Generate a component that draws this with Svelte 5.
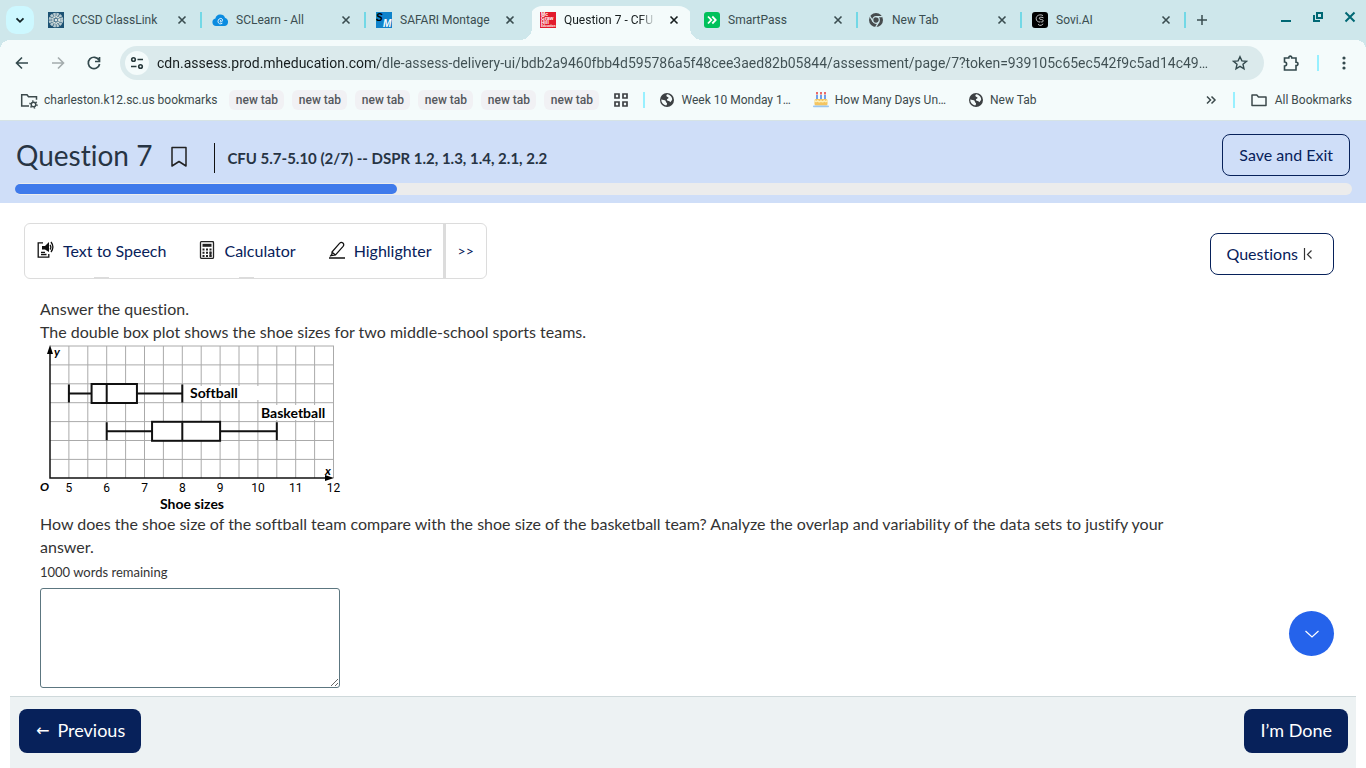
<script>
  const tabs = [
    { title: 'CCSD ClassLink', icon: 'classlink' },
    { title: 'SCLearn - All', icon: 'cloud' },
    { title: 'SAFARI Montage', icon: 'safari' },
    { title: 'Question 7 - CFU', icon: 'mcgraw', active: true },
    { title: 'SmartPass', icon: 'smartpass' },
    { title: 'New Tab', icon: 'chrome' },
    { title: 'Sovi.AI', icon: 'sovi' }
  ]

  const newTabs = [1, 2, 3, 4, 5, 6]

  const bookmarks = [
    { title: 'Week 10 Monday 1…', icon: 'globe' },
    { title: 'How Many Days Un…', icon: 'cake' },
    { title: 'New Tab', icon: 'globe' }
  ]

  const answered = 2
  const total = 7

  // plot geometry, one grid cell is half a shoe size
  const cell = 18.9
  const left = 10
  const top = 1
  const x = size => left + (size - 4.5) * 2 * cell
  const columns = Array.from({ length: 15 }, (_, i) => left + (i + 1) * cell)
  const rows = Array.from({ length: 7 }, (_, i) => top + i * cell)
  const plots = [
    { min: 5, q1: 5.6, median: 6, q3: 6.8, max: 8, y: 48.5 },
    { min: 6, q1: 7.2, median: 8, q3: 9, max: 10.5, y: 86.3 }
  ]
  const ticks = [5, 6, 7, 8, 9, 10, 11, 12]

  let url = 'cdn.assess.prod.mheducation.com/dle-assess-delivery-ui/bdb2a9460fbb4d595786a5f48cee3aed82b05844/assessment/page/7?token=939105c65ec542f9c5ad14c49…'
  let answer = ''
</script>

{#snippet icon(name)}
  <svg class="icon" viewBox="0 0 16 16" aria-hidden="true">
    {#if name === 'classlink'}
      <rect width="16" height="16" fill="#1d5273" />
      <circle cx="8" cy="8" r="5.8" fill="none" stroke="#b9cbd0" stroke-width="3" stroke-dasharray="2.4 .6" />
      <circle cx="8" cy="8" r="3.2" fill="none" stroke="#dfe5df" stroke-width="2" stroke-dasharray="1.6 .4" />
      <circle cx="8" cy="8" r="1.5" fill="#dce4e4" />
    {:else if name === 'cloud'}
      <path d="M4 14a3.8 3.8 0 0 1-.6-7.5A5 5 0 0 1 13 5.8 4.2 4.2 0 0 1 12.4 14z" fill="#0b8ce0" />
      <path d="M10.4 11.2c-2 1.4-4.4.4-4.4-1.7 0-2.1 1.900-3.500 3.500-3 1.500.5 1 2.700-.1 3.500-.8.6-1.300 0-1-.9l.4-1.200" fill="none" stroke="#fff" stroke-width=".9" />
    {:else if name === 'safari'}
      <rect width="16" height="16" fill="#0f83cb" />
      <text x="0" y="9" class="logo-s">S</text>
      <text x="7" y="15" class="logo-m">M</text>
    {:else if name === 'mcgraw'}
      <rect width="16" height="16" fill="#e21a2c" />
      <text x="1" y="4" class="logo-mh">Mc</text>
      <text x="1" y="8" class="logo-mh">Graw</text>
      <text x="1" y="12" class="logo-mh">Hill</text>
      <text x="1" y="15" class="logo-mh small">Education</text>
    {:else if name === 'smartpass'}
      <rect width="16" height="16" rx="3" fill="#00c15b" />
      <path d="M4 4.5 7.3 8 4 11.5M8.3 4.5 11.7 8l-3.4 3.5" fill="none" stroke="#fff" stroke-width="1.8" />
    {:else if name === 'chrome'}
      <circle cx="8" cy="8" r="7" fill="#474c4e" />
      <circle cx="8" cy="8" r="3.3" fill="none" stroke="#cfe7eb" stroke-width="1.2" />
      <path d="M8 4.7h6.4M5.1 9.6 1.9 4.2M10.9 9.6l-3.2 5.5" stroke="#cfe7eb" stroke-width="1.2" />
    {:else if name === 'sovi'}
      <rect width="16" height="16" rx="3" fill="#000" />
      <path d="M11 3.6C8.500 2 4.200 3 4.200 6.600c0 2.400 1.600 3.300 3.800 3.500M11.500 5.800c-2-1-4.500-.7-4.300.7.300 1.400 4.300.5 4.100 2.400-.1 1.200-1.800 1.300-2.800.9M6 12.300l1.600 1h1.600l2-1.400" fill="none" stroke="#d4d6d7" stroke-width=".9" />
    {:else if name === 'globe'}
      <circle cx="8" cy="8" r="7" fill="#3c4043" />
      <path d="M8.8 2.2c-1.4.3-1.7 1.2-1.2 2 .5.7 1.8.6 1.9 1.6.1 1.3-1.8.8-1.6 2.3.2 1 1.8.6 2.5 1.2l1 .9 1.8-2.4c.1-2.6-1.5-4.7-4.4-5.6M2.2 7.5l3.6.7c1.5.4.7 1.9 1.8 2.5.8.5.5 1.8-.4 2.8-2.8-.8-5-2.8-5-6" fill="#f4fbfb" />
    {:else if name === 'cake'}
      <path d="M4 3v5M8 3v5M12 3v5" stroke="#5b8fe4" stroke-width="1.7" />
      <path d="M4 0v2.5M8 0v2.5M12 0v2.5" stroke="#e8504f" stroke-width="1.7" />
      <rect x="1.5" y="7" width="13" height="6.5" rx="1.5" fill="#f4c561" />
      <path d="M1.5 8.5q1.6 2 3.2.3 1.7 2 3.3.2 1.6 1.8 3.3-.2 1.7 1.8 3.2-.3" fill="none" stroke="#fdf0b8" stroke-width="1.5" />
      <rect x="0" y="13.5" width="16" height="1.7" rx=".8" fill="#9cc6ee" />
    {/if}
  </svg>
{/snippet}

<div class="page">
  <div class="strip">
    <button class="tab-search" aria-label="Search tabs">
      <svg class="icon" viewBox="0 0 16 16"><path d="m4.5 6.3 3.5 3.5 3.5-3.5" fill="none" stroke="#122326" stroke-width="1.8" /></svg>
    </button>
    {#each tabs as tab}
      <div class="tab" class:active={tab.active}>
        {@render icon(tab.icon)}
        <a href="#tab">{tab.title}</a>
        <button class="close" aria-label="Close tab">
          <svg viewBox="0 0 16 16"><path d="m4.5 4.5 7 7m0-7-7 7" fill="none" stroke="currentColor" stroke-width="1.6" /></svg>
        </button>
      </div>
    {/each}
    <button class="plain add" aria-label="New tab">
      <svg class="icon" viewBox="0 0 16 16"><path d="M8 3v10M3 8h10" stroke="#3a4d50" stroke-width="1.5" /></svg>
    </button>
    <div class="window">
      <button class="plain" aria-label="Minimize"><svg class="icon" viewBox="0 0 16 16"><path d="M3 12h10" stroke="#006874" stroke-width="2" /></svg></button>
      <button class="plain" aria-label="Restore"><svg class="icon" viewBox="0 0 16 16"><path d="M7 4h5v5H7zM4 6v6h6" fill="none" stroke="#006874" stroke-width="2" /></svg></button>
      <button class="plain" aria-label="Close window"><svg class="icon" viewBox="0 0 16 16"><path d="m3.5 3.5 9 9m0-9-9 9" stroke="#006874" stroke-width="2" /></svg></button>
    </div>
  </div>

  <div class="chrome">
    <div class="nav">
      <button class="plain" aria-label="Back"><svg class="icon" viewBox="0 0 16 16"><path d="M14 8H3M8 2.5 2.5 8 8 13.5" fill="none" stroke="#33494d" stroke-width="1.6" /></svg></button>
      <button class="plain" aria-label="Forward" disabled><svg class="icon" viewBox="0 0 16 16"><path d="M2 8h11M8 2.5 13.5 8 8 13.5" fill="none" stroke="#a3acad" stroke-width="1.6" /></svg></button>
      <button class="plain" aria-label="Reload"><svg class="icon" viewBox="0 0 16 16"><path d="M13 5.2A5.7 5.7 0 1 0 13.6 9M13.5 2v4.5H9" fill="none" stroke="#33494d" stroke-width="1.7" /></svg></button>
      <div class="omnibox">
        <button class="site" aria-label="Site information">
          <svg class="icon" viewBox="0 0 16 16" fill="none" stroke="#27393b" stroke-width="1.6"><path d="M8.5 4.5H14M2 11.5h5.5" /><circle cx="4.5" cy="4.5" r="1.8" /><circle cx="11.5" cy="11.5" r="1.8" /></svg>
        </button>
        <input class="url" aria-label="Address" bind:value={url} />
        <button class="plain" aria-label="Bookmark this tab">
          <svg class="icon" viewBox="0 0 16 16"><path d="m8 1.7 1.9 4.2 4.6.4-3.5 3 1 4.5L8 11.4l-4 2.4 1-4.5-3.5-3 4.6-.4z" fill="none" stroke="#33494d" stroke-width="1.4" /></svg>
        </button>
      </div>
      <div class="tools">
        <button class="plain" aria-label="Extensions">
          <svg class="large" viewBox="0 0 18 18"><path d="M2.5 4h4.3C6.5 1.5 10 1.5 9.8 4H14v4.2c2.6-.2 2.6 3.6 0 3.4V16H2.5v-4c2.8 0 2.8-4 0-4z" fill="none" stroke="#33494d" stroke-width="1.6" /></svg>
        </button>
        <span class="bar"></span>
        <button class="plain" aria-label="Menu">
          <svg class="icon" viewBox="0 0 16 16" fill="#33494d"><circle cx="8" cy="3" r="1.6" /><circle cx="8" cy="8" r="1.6" /><circle cx="8" cy="13" r="1.6" /></svg>
        </button>
      </div>
    </div>

    <div class="bookmarks">
      <a class="bookmark managed" href="#managed">
        <svg class="large" viewBox="0 0 18 18" fill="none" stroke="#3c4a4c" stroke-width="1.5"><path d="M9 15H1.7V3.7H7l1.5 2h8v3" /><circle cx="13.5" cy="13.5" r="2.3" /><circle cx="13.5" cy="13.5" r="3.5" stroke-dasharray="1.4 2.27" /></svg>
        charleston.k12.sc.us bookmarks
      </a>
      <div class="chips">
        {#each newTabs as n (n)}
          <a class="chip" href="#new">new tab</a>
        {/each}
      </div>
      <button class="plain grid" aria-label="Tab groups">
        <svg class="icon" viewBox="0 0 16 16"><path d="M2 2h4v4H2zM10 2h4v4h-4zM2 10h4v4H2zM10 10h4v4h-4z" fill="none" stroke="#3c4043" stroke-width="1.7" /></svg>
      </button>
      <span class="bar"></span>
      <div class="sites">
        {#each bookmarks as mark}
          <a class="bookmark" href="#bookmark">{@render icon(mark.icon)}{mark.title}</a>
        {/each}
      </div>
      <button class="plain more" aria-label="More bookmarks">
        <svg class="icon" viewBox="0 0 16 16"><path d="m4 4.5 3.5 3.5L4 11.5M8.5 4.5 12 8l-3.5 3.5" fill="none" stroke="#3c4a4c" stroke-width="1.5" /></svg>
      </button>
      <span class="bar"></span>
      <a class="bookmark all" href="#all">
        <svg class="icon" viewBox="0 0 16 16"><path d="M1 3h4.8l1.7 2H15v8.5H1z" fill="none" stroke="#3c4a4c" stroke-width="1.5" stroke-linejoin="round" /></svg>
        All Bookmarks
      </a>
    </div>
  </div>

  <header>
    <div class="heading">
      <h1>Question 7</h1>
      <button class="plain flag" aria-label="Bookmark question">
        <svg viewBox="0 0 18 22"><path d="M2 1.5h14V20l-7-4.5L2 20z" fill="none" stroke="#222" stroke-width="1.5" stroke-linejoin="round" /></svg>
      </button>
      <h2>CFU 5.7-5.10 (2/7) -- DSPR 1.2, 1.3, 1.4, 2.1, 2.2</h2>
      <button class="outline">Save and Exit</button>
    </div>
    <div class="progress"><div class="fill" style="width: {answered / total * 100}%"></div></div>
  </header>

  <main>
    <div class="actions">
      <div class="toolbar">
        <button class="tool">
          <svg viewBox="0 0 18 18" fill="none" stroke="#111" stroke-width="1.3"><path d="M6 1.8H1.2v14.4h10.600V13" /><path d="M5 5h3l4-4v10L8 8.500H5z" fill="#111" stroke="none" /><path d="M13 4q1.700 2.200 0 4.500M14 1q3.800 5 0 10M4 11.300h4M4 13.500h5.500" /></svg>
          Text to Speech
        </button>
        <button class="tool">
          <svg viewBox="0 0 18 18" fill="none" stroke="#222" stroke-width="2"><rect x="2.500" y=".5" width="13" height="17" rx="1.2" stroke-width="1.3" /><path d="M4.500 4.300h9" stroke-width="3" /><path d="M4.500 8.500h9M4.500 11.700h9M4.500 14.900h9" stroke-dasharray="2 1.5" /><path d="M12.500 10.500v5.400" /></svg>
          Calculator
        </button>
        <button class="tool">
          <svg viewBox="0 0 18 18" fill="none" stroke="#111" stroke-width="1.2"><path d="m4 11 7.500-8.600q1.700-1.800 3.400-.4 1.600 1.600.2 3.400L7.500 14l-3.700.6zM3.800 11l3.700 3M4 13l-2 2.500" /><path d="M1 17h16" stroke-width="1.5" /></svg>
          Highlighter
        </button>
        <button class="tool next" aria-label="More tools">&gt;&gt;</button>
      </div>
      <button class="outline">
        Questions
        <svg viewBox="0 0 12 14"><path d="M2.5 1v12M9.5 3.500l-4 4 4 4" fill="none" stroke="#333" stroke-width="1.2" /></svg>
      </button>
    </div>

    <article>
      <p>Answer the question.</p>
      <p>The double box plot shows the shoe sizes for two middle-school sports teams.</p>
      <svg class="plot" viewBox="0 0 304 168" role="img" aria-label="Double box plot of shoe sizes">
        {#each columns as cx}
          <line x1={cx} x2={cx} y1="1" y2="133" class="rule" />
        {/each}
        {#each rows as cy}
          <line x1="10" x2="294" y1={cy} y2={cy} class="rule" />
        {/each}
        <rect x="147" y="41" width="74" height="14" fill="#fff" />
        <rect x="219" y="60" width="68" height="15" fill="#fff" />
        <path d="M10 5v128h281" class="axis" />
        <path d="m10 0 3 9H7zM294 133l-9-3v6z" />
        {#each plots as p}
          <g class="box">
            <path d="M{x(p.min)} {p.y - 9}v18M{x(p.min)} {p.y}H{x(p.q1)}M{x(p.q3)} {p.y}H{x(p.max)}M{x(p.max)} {p.y - 9}v18" />
            <rect x={x(p.q1)} y={p.y - 9.5} width={x(p.q3) - x(p.q1)} height="19" />
            <path d="M{x(p.median)} {p.y - 9}v18" />
          </g>
        {/each}
        <text x="150" y="53" class="bold">Softball</text>
        <text x="221" y="73" class="bold">Basketball</text>
        <text x="14" y="11" class="var">y</text>
        <text x="285" y="130" class="var">x</text>
        <text x="0" y="146" class="var">O</text>
        {#each ticks as tick}
          <text x={x(tick)} y="147" class="tick">{tick}</text>
        {/each}
        <text x="152" y="164" class="bold middle">Shoe sizes</text>
      </svg>
      <p>How does the shoe size of the softball team compare with the shoe size of the basketball team? Analyze the overlap and variability of the data sets to justify your answer.</p>
      <label for="answer">1000 words remaining</label>
      <textarea id="answer" bind:value={answer}></textarea>
    </article>
    <button class="scroll" aria-label="Scroll down">
      <svg class="icon" viewBox="0 0 16 16"><path d="m1.500 5 6.500 6 6.500-6" fill="none" stroke="#fff" stroke-width="1.2" /></svg>
    </button>
  </main>

  <footer>
    <button class="primary"><span class="arrow">←</span>Previous</button>
    <button class="primary">I’m Done</button>
  </footer>
</div>

<style>
  :global(body) {
    margin: 0;
    background: #fff;
  }
  .page {
    display: flex;
    flex-direction: column;
    min-height: 100vh;
    font-family: Lato, sans-serif;
    font-variant-ligatures: none;
    color: #333;
  }
  button {
    font: inherit;
    font-variant-ligatures: none;
    cursor: pointer;
  }
  a {
    color: inherit;
    text-decoration: none;
  }
  svg {
    display: block;
    flex: none;
  }
  .icon {
    width: 16px;
    height: 16px;
  }
  .large {
    width: 18px;
    height: 18px;
  }
  .plain {
    display: block;
    padding: 0;
    border: 0;
    background: none;
  }
  .bar {
    width: 2px;
    height: 16px;
    background: #97f0ff;
  }

  /* browser tabs */
  .strip {
    display: flex;
    align-items: center;
    box-sizing: border-box;
    height: 40px;
    padding-left: 6px;
    background: #cee7eb;
    font-family: Roboto, sans-serif;
    font-size: 12px;
    color: #3a4d50;
  }
  .tab-search {
    display: grid;
    place-items: center;
    width: 28px;
    height: 28px;
    margin-right: 4px;
    padding: 0;
    border: 0;
    border-radius: 10px;
    background: #cdf8ff;
  }
  .tab {
    position: relative;
    display: flex;
    flex: 0 1 164px;
    align-items: center;
    box-sizing: border-box;
    height: 28px;
    padding: 0 12px 0 10px;
  }
  .tab::after {
    content: '';
    position: absolute;
    right: 0;
    width: 2px;
    height: 16px;
    background: #72d8e6;
  }
  .tab a {
    flex: 1;
    overflow: hidden;
    margin-left: 8px;
    white-space: nowrap;
  }
  .tab:has(+ .active)::after {
    display: none;
  }
  .close {
    padding: 0;
    border: 0;
    background: none;
    color: inherit;
  }
  .close svg {
    width: 16px;
    height: 16px;
  }
  .active {
    align-self: flex-end;
    height: 34px;
    padding-bottom: 6px;
    color: #161d1e;
    background: linear-gradient(#f4fbfb, #f4fbfb) 2px 0 / 158px 100% no-repeat;
    border-radius: 12px 16px 0 0;
  }
  .active a {
    mask-image: linear-gradient(to right, #000 76px, transparent 92px);
  }
  .active::before,
  .active::after {
    content: '';
    position: absolute;
    bottom: 0;
    width: 12px;
    height: 12px;
  }
  .active::before {
    left: -10px;
    background: radial-gradient(circle at 0 0, transparent 12px, #f4fbfb 12px);
  }
  .active::after {
    right: -8px;
    background: radial-gradient(circle at 100% 0, transparent 12px, #f4fbfb 12px);
  }
  .add {
    margin-left: 8px;
  }
  .window {
    display: flex;
    gap: 16px;
    margin: 0 8px 6px auto;
  }
  .logo-s,
  .logo-m {
    font: italic 900 10px 'Liberation Sans', sans-serif;
  }
  .logo-m {
    fill: #fff;
  }
  .logo-mh {
    fill: #fff;
    font: bold 5px 'Liberation Sans', sans-serif;
  }
  .small {
    font-size: 3px;
  }

  /* address and bookmarks bars */
  .chrome {
    border-bottom: 1px solid #d6e3e5;
    background: #f4fbfb;
    font-family: Roboto, sans-serif;
    font-size: 12px;
    color: #3c4a4c;
  }
  .nav {
    display: flex;
    align-items: center;
    gap: 20px;
    padding: 6px 14px 0;
    /* strip colour shows behind the rounded top corners */
    background:
      radial-gradient(circle at 100% 100%, transparent 10px, #cee7eb 10px) 0 0 / 10px 10px no-repeat,
      radial-gradient(circle at 0 100%, transparent 10px, #cee7eb 10px) 100% 0 / 10px 10px no-repeat;
  }
  .omnibox {
    display: flex;
    flex: 1;
    align-items: center;
    height: 34px;
    margin: 0 4px 0 -2px;
    padding: 0 16px 0 5px;
    border-radius: 17px;
    background: #dbeaec;
  }
  .site {
    display: grid;
    place-items: center;
    flex: none;
    width: 24px;
    height: 24px;
    padding: 0;
    border: 0;
    border-radius: 50%;
    background: #f4fbfb;
  }
  .url {
    flex: 1;
    min-width: 0;
    margin: 0 16px 0 8px;
    padding: 0;
    border: 0;
    outline: 0;
    background: linear-gradient(to right, #161d1e 221px, #3f4f52 221px);
    background-clip: text;
    color: transparent;
    caret-color: #161d1e;
    font: 14px Roboto, sans-serif;
    text-overflow: ellipsis;
  }
  .tools {
    display: flex;
    align-items: center;
    gap: 17px;
    margin-left: -6px;
  }
  .bookmarks {
    display: flex;
    align-items: center;
    height: 40px;
    padding: 0 14px 0 20px;
  }
  .bookmark {
    display: flex;
    align-items: center;
    gap: 6px;
    white-space: nowrap;
  }
  .sites {
    display: flex;
    gap: 22px;
    margin-left: 14px;
  }
  .chips {
    display: flex;
    gap: 8px;
    margin-left: 12px;
  }
  .chip {
    min-width: 43px;
    padding: 0 6px;
    border-radius: 6px;
    background: #f1f1f4;
    color: #55585d;
    font-weight: 500;
    line-height: 20px;
    text-align: center;
  }
  .grid {
    margin: 0 14px;
  }
  .more {
    margin: 0 14px 0 auto;
  }
  .all {
    gap: 8px;
    margin-left: 16px;
  }

  /* assessment header */
  header {
    padding: 13px 14px 8px 15px;
    background: #cfdef8;
    color: #273444;
  }
  .heading {
    display: flex;
    align-items: center;
    height: 42px;
    margin: 0 2px 7px 1px;
  }
  h1 {
    margin: 0;
    font-size: 28px;
    font-weight: 400;
  }
  .flag {
    margin: 4px 26px 0 18px;
  }
  .flag svg {
    width: 18px;
    height: 22px;
  }
  h2 {
    margin: 6px 0 0;
    padding-left: 12px;
    border-left: 1px solid #111;
    font-size: 15px;
    line-height: 30px;
  }
  .outline {
    display: flex;
    align-items: center;
    gap: 4px;
    box-sizing: border-box;
    height: 42px;
    margin-left: auto;
    padding: 0 16px 2px;
    border: 1px solid #07215a;
    border-radius: 8px;
    background: none;
    color: #07215a;
    font-size: 16px;
    white-space: nowrap;
  }
  .outline svg {
    width: 12px;
    height: 14px;
    margin: 2px 3px 0 0;
  }
  .progress {
    padding: 1px 0;
    border-radius: 6px;
    background: #ececec;
  }
  .fill {
    height: 10px;
    border-radius: 5px;
    background: #3f7aeb;
  }

  /* question */
  main {
    position: relative;
    flex: 1;
    padding: 20px 32px 8px 24px;
  }
  .actions {
    display: flex;
    align-items: center;
  }
  .toolbar {
    display: flex;
    box-sizing: border-box;
    height: 56px;
    border: 1px solid #dcdcdc;
    border-radius: 6px;
  }
  .tool {
    position: relative;
    display: flex;
    align-items: center;
    gap: 8px;
    padding: 0 20px 2px 12px;
    border: 0;
    background: none;
    color: #07215a;
    font-size: 16px;
  }
  .tool svg {
    width: 18px;
    height: 18px;
  }
  .tool:nth-child(-n + 2)::after {
    content: '';
    position: absolute;
    bottom: 0;
    left: 50%;
    width: 15px;
    height: 1px;
    margin-left: -12px;
    background: #dcdcdc;
  }
  .tool:nth-child(3) {
    padding-right: 11px;
  }
  .next {
    padding: 0 12px 2px;
    border-left: 3px solid #dcdcdc;
    font-size: 14px;
  }
  .actions .outline {
    margin-top: 6px;
  }
  article {
    max-width: 1152px;
    padding: 18px 0 0 16px;
    font-size: 16px;
    line-height: 23px;
  }
  p {
    margin: 0;
  }
  label {
    display: block;
    margin: 3px 0 5px;
    font-size: 13px;
    line-height: 22px;
  }
  textarea {
    display: block;
    box-sizing: border-box;
    width: 300px;
    height: 100px;
    border: 1px solid #5c7680;
    border-radius: 3px;
    background: #fff;
    font: inherit;
  }
  .scroll {
    position: absolute;
    right: 32px;
    bottom: 40px;
    display: grid;
    place-items: center;
    width: 45px;
    height: 45px;
    padding: 0;
    border: 0;
    border-radius: 50%;
    background: #2563eb;
  }
  .plot {
    width: 304px;
    height: 168px;
    margin-top: 2px;
    margin-bottom: -1px;
  }
  .rule {
    stroke: #aaa;
  }
  .axis {
    fill: none;
    stroke: #111;
    stroke-width: 1.5;
  }
  .box {
    fill: #fff;
    stroke: #111;
    stroke-width: 2;
  }
  .bold,
  .var {
    font-size: 14px;
    font-weight: 700;
  }
  .var {
    font-size: 12px;
    font-style: italic;
  }
  .middle,
  .tick {
    text-anchor: middle;
  }
  .tick {
    font-family: Roboto, sans-serif;
    font-size: 12px;
  }

  footer {
    display: flex;
    justify-content: space-between;
    margin: 0 10px;
    padding: 12px 8px 15px 9px;
    border-top: 1px solid #cfd9db;
    background: #edf2f3;
  }
  .primary {
    display: flex;
    align-items: center;
    gap: 8px;
    height: 44px;
    padding: 0 16px 2px 17px;
    border: 0;
    border-radius: 8px;
    background: #07215a;
    color: #fff;
    font-size: 18px;
  }
  .primary:last-child {
    padding-left: 16px;
  }
  .arrow {
    font-family: 'DejaVu Sans', sans-serif;
    font-size: 16px;
  }
</style>
